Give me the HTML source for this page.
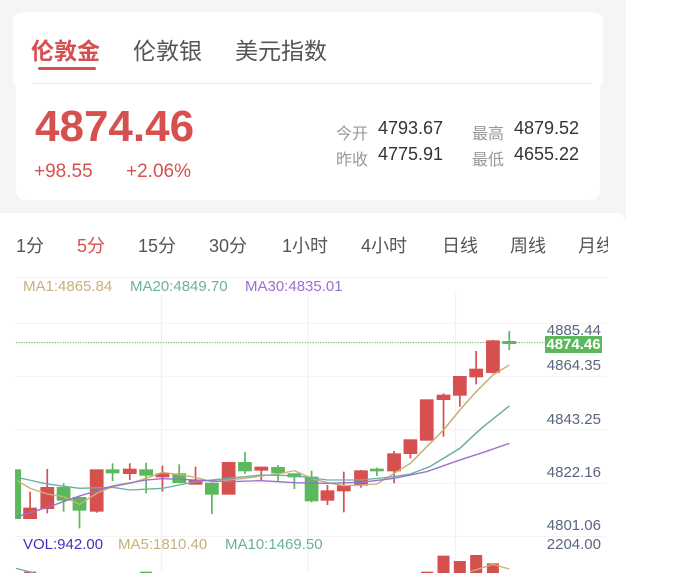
<!DOCTYPE html>
<html><head><meta charset="utf-8"><style>
*{margin:0;padding:0;box-sizing:border-box}
body{width:673px;height:573px;overflow:hidden;background:#fff;font-family:"Liberation Sans","Noto Sans CJK SC",sans-serif;position:relative}
.bg{position:absolute;left:0;top:0;width:626px;height:573px;background:#f5f5f5}
.abs{position:absolute;white-space:nowrap}
.card1{position:absolute;left:13px;top:12px;width:590px;height:72px;background:#fff;border-radius:10px 10px 0 0}
.card2{position:absolute;left:16px;top:83px;width:584px;height:117px;background:#fff;border-radius:0 0 10px 10px}
.card3{position:absolute;left:0;top:213px;width:626px;height:360px;background:#fff;border-radius:0 10px 0 0}
.tab{font-size:23px;color:#555;top:32px}
.lbl{font-size:16px;color:#999}
.val{font-size:18px;color:#333}
.tt{font-size:18px;color:#555;top:232px}
.red{color:#d65050}
.ax{font-size:15px;color:#5a6680;right:72px;text-align:right}
.leg{font-size:15px;top:278px}
</style></head><body>
<div class="bg"></div>
<div class="card1"></div>
<div class="card2"></div>
<div class="abs tab red" style="left:31px;font-weight:bold">伦敦金</div>
<div class="abs" style="left:38px;top:67px;width:58px;height:3px;background:#d65050;border-radius:2px"></div>
<div class="abs tab" style="left:133px">伦敦银</div>
<div class="abs tab" style="left:235px">美元指数</div>
<div class="abs" style="left:33px;top:83px;width:558px;height:1px;background:#e6e6e6"></div>
<div class="abs red" style="left:35px;top:102px;font-size:44px;font-weight:bold">4874.46</div>
<div class="abs red" style="left:34px;top:161px;font-size:19px">+98.55</div>
<div class="abs red" style="left:126px;top:161px;font-size:19px">+2.06%</div>
<div class="abs lbl" style="left:336px;top:120px">今开</div>
<div class="abs val" style="left:378px;top:118px">4793.67</div>
<div class="abs lbl" style="left:472px;top:120px">最高</div>
<div class="abs val" style="left:514px;top:118px">4879.52</div>
<div class="abs lbl" style="left:336px;top:146px">昨收</div>
<div class="abs val" style="left:378px;top:144px">4775.91</div>
<div class="abs lbl" style="left:472px;top:146px">最低</div>
<div class="abs val" style="left:514px;top:144px">4655.22</div>
<div class="card3"></div>
<div class="abs tt" style="left:16px">1分</div>
<div class="abs tt red" style="left:77px">5分</div>
<div class="abs tt" style="left:138px">15分</div>
<div class="abs tt" style="left:209px">30分</div>
<div class="abs tt" style="left:282px">1小时</div>
<div class="abs tt" style="left:361px">4小时</div>
<div class="abs tt" style="left:442px">日线</div>
<div class="abs tt" style="left:510px">周线</div>
<div class="abs" style="left:578px;top:232px;width:30px;overflow:hidden;font-size:18px;color:#555">月线</div>
<div class="abs" style="left:16px;top:277px;width:592px;height:1px;background:#f0f0f0"></div>
<div class="abs leg" style="left:23px;color:#c8b07a">MA1:4865.84</div>
<div class="abs leg" style="left:130px;color:#6ab0a0">MA20:4849.70</div>
<div class="abs leg" style="left:245px;color:#9b6fcf">MA30:4835.01</div>
<svg class="abs" style="left:0;top:270px" width="673" height="303" viewBox="0 0 1566 909" preserveAspectRatio="none">
<g stroke="#f2f2f2" stroke-width="3">
<line x1="37" y1="160" x2="1410" y2="160"/><line x1="37" y1="320" x2="1410" y2="320"/><line x1="37" y1="480" x2="1410" y2="480"/><line x1="37" y1="640" x2="1410" y2="640"/><line x1="37" y1="800" x2="1410" y2="800"/>
<line x1="376" y1="70" x2="376" y2="909"/><line x1="717" y1="70" x2="717" y2="909"/><line x1="1060" y1="70" x2="1060" y2="909"/>
</g>
<line x1="37" y1="218" x2="1268" y2="218" stroke="#5cb85c" stroke-width="3" stroke-dasharray="3,3"/>
<g stroke-width="4">
<g stroke="#5cb85c" fill="#5cb85c">
<rect x="37" y="600" width="10" height="145"/>
<line x1="148" y1="640" x2="148" y2="725"/><rect x="134" y="653" width="28" height="37"/>
<line x1="185" y1="683" x2="185" y2="775"/><rect x="171" y="683" width="28" height="37"/>
<line x1="262" y1="580" x2="262" y2="633"/><rect x="248" y="600" width="28" height="8"/>
<line x1="340" y1="578" x2="340" y2="670"/><rect x="326" y="600" width="28" height="15"/>
<line x1="417" y1="583" x2="417" y2="640"/><rect x="403" y="612" width="28" height="25"/>
<line x1="493" y1="640" x2="493" y2="732"/><rect x="479" y="640" width="28" height="32"/>
<line x1="570" y1="546" x2="570" y2="612"/><rect x="556" y="578" width="28" height="24"/>
<line x1="647" y1="585" x2="647" y2="633"/><rect x="633" y="593" width="28" height="15"/>
<line x1="685" y1="612" x2="685" y2="657"/><rect x="671" y="612" width="28" height="8"/>
<line x1="725" y1="602" x2="725" y2="697"/><rect x="711" y="622" width="28" height="70"/>
<line x1="877" y1="593" x2="877" y2="618"/><rect x="863" y="598" width="28" height="4"/>
<line x1="1185" y1="183" x2="1185" y2="240"/><rect x="1171" y="215" width="28" height="5"/>
</g>
<g stroke="#d65050" fill="#d65050">
<line x1="70" y1="665" x2="70" y2="745"/><rect x="56" y="715" width="28" height="30"/>
<line x1="110" y1="597" x2="110" y2="730"/><rect x="96" y="653" width="28" height="62"/>
<line x1="225" y1="600" x2="225" y2="728"/><rect x="211" y="600" width="28" height="123"/>
<line x1="302" y1="580" x2="302" y2="630"/><rect x="288" y="598" width="28" height="12"/>
<line x1="378" y1="587" x2="378" y2="665"/><rect x="364" y="612" width="28" height="8"/>
<line x1="455" y1="590" x2="455" y2="642"/><rect x="441" y="632" width="28" height="10"/>
<line x1="532" y1="578" x2="532" y2="672"/><rect x="518" y="578" width="28" height="94"/>
<line x1="608" y1="590" x2="608" y2="633"/><rect x="594" y="592" width="28" height="8"/>
<line x1="762" y1="645" x2="762" y2="705"/><rect x="748" y="663" width="28" height="27"/>
<line x1="800" y1="605" x2="800" y2="727"/><rect x="786" y="648" width="28" height="14"/>
<line x1="840" y1="600" x2="840" y2="653"/><rect x="826" y="603" width="28" height="42"/>
<line x1="917" y1="543" x2="917" y2="640"/><rect x="903" y="552" width="28" height="50"/>
<line x1="955" y1="508" x2="955" y2="565"/><rect x="941" y="510" width="28" height="40"/>
<line x1="993" y1="388" x2="993" y2="512"/><rect x="979" y="390" width="28" height="120"/>
<line x1="1032" y1="370" x2="1032" y2="500"/><rect x="1018" y="376" width="28" height="12"/>
<line x1="1070" y1="320" x2="1070" y2="410"/><rect x="1056" y="320" width="28" height="55"/>
<line x1="1108" y1="243" x2="1108" y2="343"/><rect x="1094" y="298" width="28" height="22"/>
<line x1="1147" y1="210" x2="1147" y2="310"/><rect x="1133" y="213" width="28" height="94"/>
</g>
</g>
<g fill="none" stroke-width="4">
<polyline stroke="#c8b07a" points="40,632 70,655 110,672 148,680 185,703 225,670 262,650 302,640 340,625 378,607 417,614 455,622 493,635 532,630 570,625 608,618 647,612 685,602 725,625 762,638 800,647 840,645 877,642 917,610 955,580 993,530 1032,480 1070,420 1108,365 1147,315 1185,285"/>
<polyline stroke="#6ab0a0" points="40,622 110,642 185,655 262,652 302,660 378,655 455,635 532,625 608,615 685,617 762,630 840,630 917,620 955,612 1000,590 1070,535 1120,475 1185,408"/>
<polyline stroke="#9b6fcf" points="40,740 110,712 185,678 262,648 340,630 378,626 455,630 532,635 608,632 685,638 762,640 840,637 917,625 993,605 1070,570 1130,545 1185,520"/>
</g>
<g fill="#d65050"><rect x="980" y="905" width="28" height="4"/><rect x="1018" y="857" width="28" height="52"/><rect x="1056" y="873" width="28" height="36"/><rect x="1094" y="855" width="28" height="54"/><rect x="1133" y="880" width="28" height="29"/><rect x="56" y="905" width="28" height="4"/></g>
<rect x="326" y="905" width="28" height="4" fill="#5cb85c"/>
<polyline fill="none" stroke="#c8b07a" stroke-width="4" points="1094,905 1147,883 1185,897"/>
<polyline fill="none" stroke="#6ab0a0" stroke-width="4" points="37,895 80,909"/>
</svg>
<div class="abs ax" style="top:322px">4885.44</div>
<div class="abs" style="left:545px;top:336px;width:57px;height:17px;background:#5cb85c;color:#fff;font-size:15px;font-weight:bold;text-align:center;line-height:17px">4874.46</div>
<div class="abs ax" style="top:357px">4864.35</div>
<div class="abs ax" style="top:411px">4843.25</div>
<div class="abs ax" style="top:464px">4822.16</div>
<div class="abs ax" style="top:517px">4801.06</div>
<div class="abs ax" style="top:536px">2204.00</div>
<div class="abs" style="left:23px;top:536px;font-size:15px;color:#4a2fbf">VOL:942.00</div>
<div class="abs" style="left:118px;top:536px;font-size:15px;color:#c8b07a">MA5:1810.40</div>
<div class="abs" style="left:225px;top:536px;font-size:15px;color:#6ab0a0">MA10:1469.50</div>
</body></html>
